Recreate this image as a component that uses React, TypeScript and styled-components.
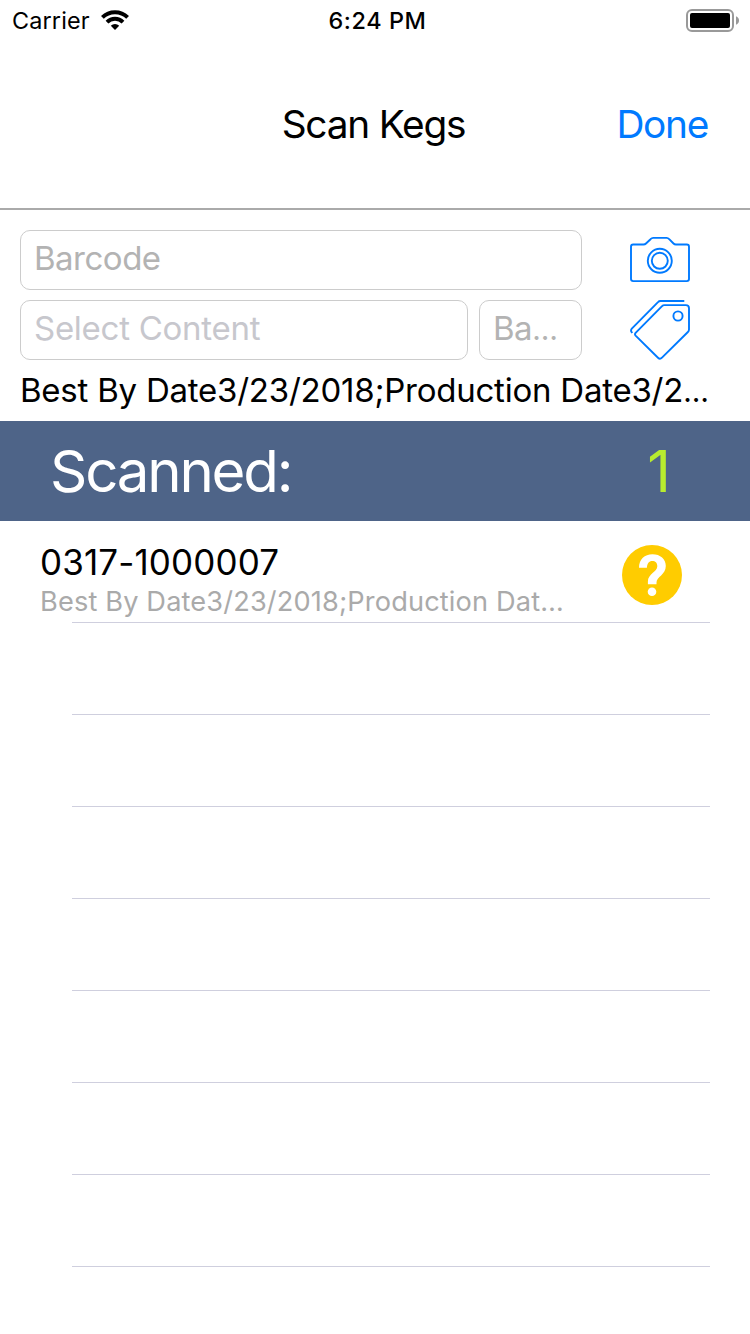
import React from "react";
import styled, { createGlobalStyle } from "styled-components";

const GlobalStyle = createGlobalStyle`
  * { box-sizing: border-box; }
  body {
    margin: 0;
    background: #fff;
    color: #000;
    font-family: Inter, "Liberation Sans", sans-serif;
  }
`;

const Screen = styled.main`
  width: 750px;
  height: 1334px;
  display: flex;
  flex-direction: column;
  overflow: hidden;
  background: #fff;
`;

const Label = styled.span<{ $size: number; $tracking?: number; $weight?: number; $color?: string }>`
  font-size: ${(p) => p.$size}px;
  font-weight: ${(p) => p.$weight ?? 400};
  letter-spacing: ${(p) => p.$tracking ?? 0}px;
  color: ${(p) => p.$color ?? "#000"};
  white-space: nowrap;
`;

const Dots = styled.span`
  font-size: 0.9em;
`;

const StatusBar = styled.header`
  height: 40px;
  flex: none;
  display: grid;
  grid-template-columns: 1fr auto 1fr;
  align-items: center;
  padding: 1px 11px 0 12px;
  line-height: 28px;
`;

const Clock = styled(Label)`
  padding-left: 4px;
`;

const Carrier = styled.div`
  display: flex;
  align-items: center;
  gap: 11px;

  svg {
    margin-bottom: 2px;
  }
`;

const BatterySlot = styled.div`
  display: flex;
  justify-content: flex-end;
`;

const NavBar = styled.nav`
  height: 170px;
  flex: none;
  display: grid;
  grid-template-columns: 1fr auto 1fr;
  align-items: start;
  padding: 60px 42px 0 39px;
  line-height: 48px;
  border-bottom: 2px solid #aaa;
`;

const DoneButton = styled.button`
  grid-column: 3;
  justify-self: end;
  padding: 0;
  border: 0;
  background: none;
  font: inherit;
`;

const Title = styled.h1`
  grid-column: 2;
  margin: 0;
  font: inherit;
`;

const Form = styled.section`
  height: 211px;
  flex: none;
  padding: 20px 20px 0;
`;

const FormRow = styled.div`
  height: 60px;
  display: flex;
  margin-bottom: 10px;
`;

const Field = styled.div<{ $width: number; $gap?: number }>`
  width: ${(p) => p.$width}px;
  height: 60px;
  margin-right: ${(p) => p.$gap ?? 48}px;
  padding: 0 13px;
  border: 1px solid #ccc;
  border-radius: 10px;
  line-height: 55px;
`;

const Attributes = styled.div`
  line-height: 40px;
`;

const Summary = styled.section`
  height: 100px;
  flex: none;
  display: flex;
  justify-content: space-between;
  padding: 0 79px 0 50px;
  line-height: 101px;
  background: #4e6488;
`;

const List = styled.ul`
  margin: 0;
  padding: 0;
  list-style: none;
`;

const Row = styled.li<{ $height?: number }>`
  height: ${(p) => p.$height ?? 92}px;
  display: flex;
  justify-content: space-between;
  padding: 0 68px 0 40px;
  background: linear-gradient(#cfcfde, #cfcfde) 72px 100% / 638px 1px no-repeat;
`;

const RowText = styled.div`
  display: flex;
  flex-direction: column;
  padding-top: 19px;
`;

const RowTitle = styled(Label)`
  line-height: 44px;
`;

const RowDetail = styled(Label)`
  line-height: 36px;
`;

const StatusIcon = styled.div`
  padding-top: 24px;
`;

const WifiIcon = () => (
  <svg width="28" height="20" viewBox="0 0 28 20">
    <g fill="none" stroke="#000" strokeWidth="3.9">
      <path d="M1.4 7.4A17.9 17.9 0 0 1 26.6 7.4" />
      <path d="M6 12.1A11.3 11.3 0 0 1 22 12.1" />
    </g>
    <path d="M14 20L9.8 15.8A6 6 0 0 1 18.2 15.8Z" />
  </svg>
);

const BatteryIcon = () => (
  <svg width="53" height="24" viewBox="0 0 53 24">
    <rect x="1" y="1" width="46" height="21" rx="5" fill="none" stroke="#999" strokeWidth="2" />
    <rect x="4" y="4" width="40" height="15" rx="2" />
    <path d="M50 7.2Q53 8.4 53 11.5T50 15.8Z" fill="#999" />
  </svg>
);

const CameraIcon = () => (
  <svg width="60" height="60" viewBox="0 0 60 60" fill="none" stroke="#007aff" strokeWidth="1.9" strokeLinejoin="round">
    <path d="M3.2 14.5H13.5Q15 14.5 16 13.5L20.5 9.2Q21.8 7.9 23.2 7.9H36.6Q38 7.9 39.2 9.2L43.5 13.5Q44.5 14.5 46 14.5H56.8Q59 14.5 59 16.7V49Q59 51.1 56.8 51.1H3.2Q1 51.1 1 49V16.7Q1 14.5 3.2 14.5Z" />
    <circle cx="29.8" cy="30.8" r="12" />
    <circle cx="29.8" cy="30.8" r="8" />
  </svg>
);

const TagsIcon = () => (
  <svg width="60" height="60" viewBox="0 0 60 60" fill="none" stroke="#007aff" strokeWidth="1.9" strokeLinejoin="round">
    <path d="M2.2 33L1.3 31.5Q.6 30 1.8 28.6L28 2.1Q29 1 30.5 1H54.3" />
    <path d="M5.6 35.6Q4.4 34.2 5.6 32.8L31.8 6.3Q33 5.1 34.5 5.1H55.8Q59 5.1 59 8.2V29.5Q59 31 57.9 32L32 57.7Q30 59.7 28 57.8Z" />
    <circle cx="48" cy="16" r="4.6" />
  </svg>
);

const QuestionIcon = () => (
  <svg width="60" height="60" viewBox="0 0 60 60">
    <circle cx="30" cy="30" r="30" fill="#fc0" />
    <path
      fill="#fff"
      d="M17 22.8C17 14.4 22.7 9.3 30.4 9.3C38.4 9.3 43.8 14.2 43.8 21C43.8 30 34.5 31.6 34.5 37.6V39.3H25.9V36.4C25.9 28.8 35.3 26.8 35.3 21.2C35.3 17.9 33.3 16 30.3 16C27 16 25.1 18.4 24.9 22.8Z"
    />
    <circle cx="30" cy="46.8" r="4.3" fill="#fff" />
  </svg>
);

const emptyRows = [1, 2, 3, 4, 5, 6, 7];

export default function App() {
  return (
    <Screen>
      <GlobalStyle />
      <StatusBar>
        <Carrier>
          <Label $size={23.4} $tracking={0.15}>Carrier</Label>
          <WifiIcon />
        </Carrier>
        <Clock $size={23.4} $weight={500} $tracking={0.6}>6:24 PM</Clock>
        <BatterySlot>
          <BatteryIcon />
        </BatterySlot>
      </StatusBar>
      <NavBar>
        <Title>
          <Label $size={38.8} $tracking={-1.2}>Scan Kegs</Label>
        </Title>
        <DoneButton>
          <Label $size={38.8} $tracking={-1.3} $color="#007aff">Done</Label>
        </DoneButton>
      </NavBar>
      <Form>
        <FormRow>
          <Field $width={562}>
            <Label $size={33} $tracking={-0.5} $color="#b3b3b3">Barcode</Label>
          </Field>
          <CameraIcon />
        </FormRow>
        <FormRow>
          <Field $width={448} $gap={11}>
            <Label $size={33} $tracking={-0.27} $color="#c7c7cd">Select Content</Label>
          </Field>
          <Field $width={103}>
            <Label $size={33} $tracking={-0.5} $color="#b3b3b3">Ba<Dots>…</Dots></Label>
          </Field>
          <TagsIcon />
        </FormRow>
        <Attributes>
          <Label $size={33} $tracking={-0.23}>Best By Date3/23/2018;Production Date3/2<Dots>…</Dots></Label>
        </Attributes>
      </Form>
      <Summary>
        <Label $size={58.2} $tracking={-2.2} $color="#fff">Scanned:</Label>
        <Label $size={58.2} $color="#b8ec2e">1</Label>
      </Summary>
      <List>
        <Row $height={102}>
          <RowText>
            <RowTitle $size={35} $tracking={0.13}>0317-1000007</RowTitle>
            <RowDetail $size={27.2} $tracking={0.14} $color="#aaa">Best By Date3/23/2018;Production Dat…</RowDetail>
          </RowText>
          <StatusIcon>
            <QuestionIcon />
          </StatusIcon>
        </Row>
        {emptyRows.map((n) => (
          <Row key={n} />
        ))}
      </List>
    </Screen>
  );
}
